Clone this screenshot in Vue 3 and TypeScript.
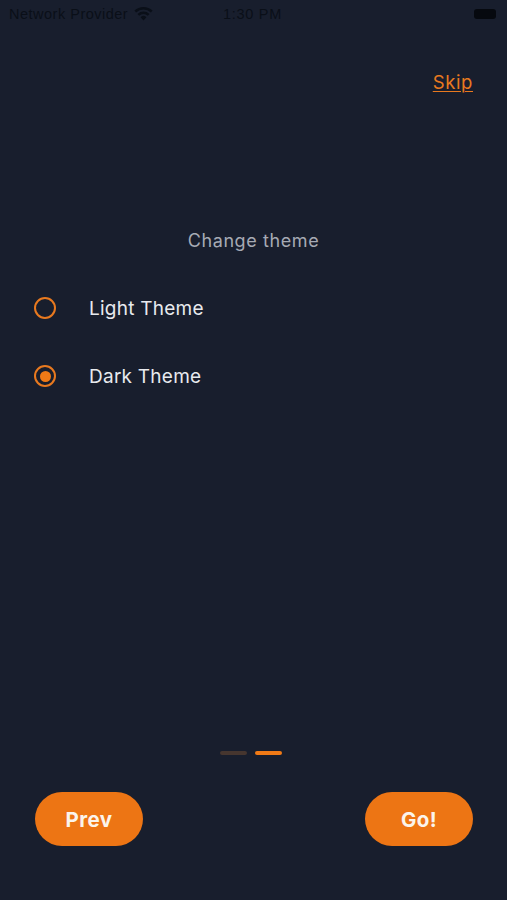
<script setup lang="ts">
import { ref } from "vue";

type ThemeName = "light" | "dark";
const theme = ref<ThemeName>("dark");
const options: { id: ThemeName; label: string }[] = [
  { id: "light", label: "Light Theme" },
  { id: "dark", label: "Dark Theme" },
];
</script>

<template>
  <div class="screen">
    <div class="status">
      <div class="status-left">
        <span>Network Provider</span>
        <svg class="wifi" viewBox="0 0 20 15" width="19" height="14" aria-hidden="true">
          <path d="M10 14.5 6.9 11a4.4 4.4 0 0 1 6.2 0z" />
          <path d="M5.4 9.4 3.6 7.4a9.3 9.3 0 0 1 12.8 0l-1.8 2a6.7 6.7 0 0 0-9.2 0z" />
          <path d="M2.1 5.8.3 3.8a14.3 14.3 0 0 1 19.4 0l-1.8 2a11.6 11.6 0 0 0-15.8 0z" />
        </svg>
      </div>
      <span class="time">1:30 PM</span>
      <div class="battery"></div>
    </div>

    <div class="skip-row"><a class="skip">Skip</a></div>

    <h1 class="title">Change theme</h1>

    <div class="options">
      <label v-for="o in options" :key="o.id" class="option" @click="theme = o.id">
        <span class="radio" :class="{ on: theme === o.id }"></span>
        <span class="label">{{ o.label }}</span>
      </label>
    </div>

    <div class="dots">
      <span class="dot"></span>
      <span class="dot active"></span>
    </div>

    <div class="actions">
      <button class="btn" type="button">Prev</button>
      <button class="btn" type="button">Go!</button>
    </div>
  </div>
</template>

<style>
html,
body {
  margin: 0;
  background: #181e2d;
}
</style>

<style scoped>
.screen {
  box-sizing: border-box;
  width: 507px;
  height: 900px;
  background: #181e2d;
  display: flex;
  flex-direction: column;
  font-family: Inter, "Liberation Sans", sans-serif;
  overflow: hidden;
}
.status {
  height: 27px;
  padding: 0 11px 0 9px;
  display: grid;
  grid-template-columns: 1fr auto 1fr;
  align-items: center;
  color: #0a0f18;
  font-size: 14.5px;
  font-family: "Liberation Sans", sans-serif;
}
.status-left {
  display: flex;
  align-items: center;
  gap: 6px;
  letter-spacing: 0.5px;
}
.wifi {
  fill: #0a0f18;
}
.time {
  font-size: 14.5px;
  letter-spacing: 0.7px;
}
.battery {
  justify-self: end;
  width: 22px;
  height: 10px;
  border-radius: 3px;
  background: #06090f;
}
.skip-row {
  display: flex;
  justify-content: flex-end;
  padding: 42px 34px 0 0;
}
.skip {
  color: #e8791f;
  font-size: 18.5px;
  line-height: 26px;
  letter-spacing: 0.6px;
  text-decoration: underline;
  text-underline-offset: 2px;
  text-decoration-thickness: 1px;
}
.title {
  margin: 133px 0 0;
  text-align: center;
  color: #a6aab4;
  font-family: Inter, sans-serif;
  font-weight: 400;
  font-size: 18px;
  line-height: 26px;
  letter-spacing: 0.6px;
}
.options {
  margin-top: 37px;
  padding-left: 34px;
  display: flex;
  flex-direction: column;
  gap: 34px;
}
.option {
  display: flex;
  align-items: center;
  gap: 33px;
  height: 34px;
}
.radio {
  box-sizing: border-box;
  width: 22px;
  height: 22px;
  border: 2.4px solid #e8791f;
  border-radius: 50%;
  display: flex;
  align-items: center;
  justify-content: center;
}
.radio.on::after {
  content: "";
  width: 11px;
  height: 11px;
  border-radius: 50%;
  background: #f07a16;
}
.label {
  color: #e8eaee;
  font-size: 19px;
  letter-spacing: 0.25px;
}
.dots {
  margin-top: auto;
  display: flex;
  justify-content: center;
  gap: 8px;
  padding-right: 5px;
}
.dot {
  width: 27px;
  height: 4px;
  border-radius: 2px;
  background: #46362f;
}
.dot.active {
  background: #f07a16;
}
.actions {
  margin-top: 37px;
  padding: 0 34px 54px 35px;
  display: flex;
  justify-content: space-between;
}
.btn {
  width: 108px;
  height: 54px;
  border: 0;
  border-radius: 27px;
  background: #ed7514;
  color: #fbf4ec;
  font-family: Inter, sans-serif;
  font-weight: 700;
  font-size: 20.5px;
  letter-spacing: 0.4px;
  padding: 0;
}
</style>
